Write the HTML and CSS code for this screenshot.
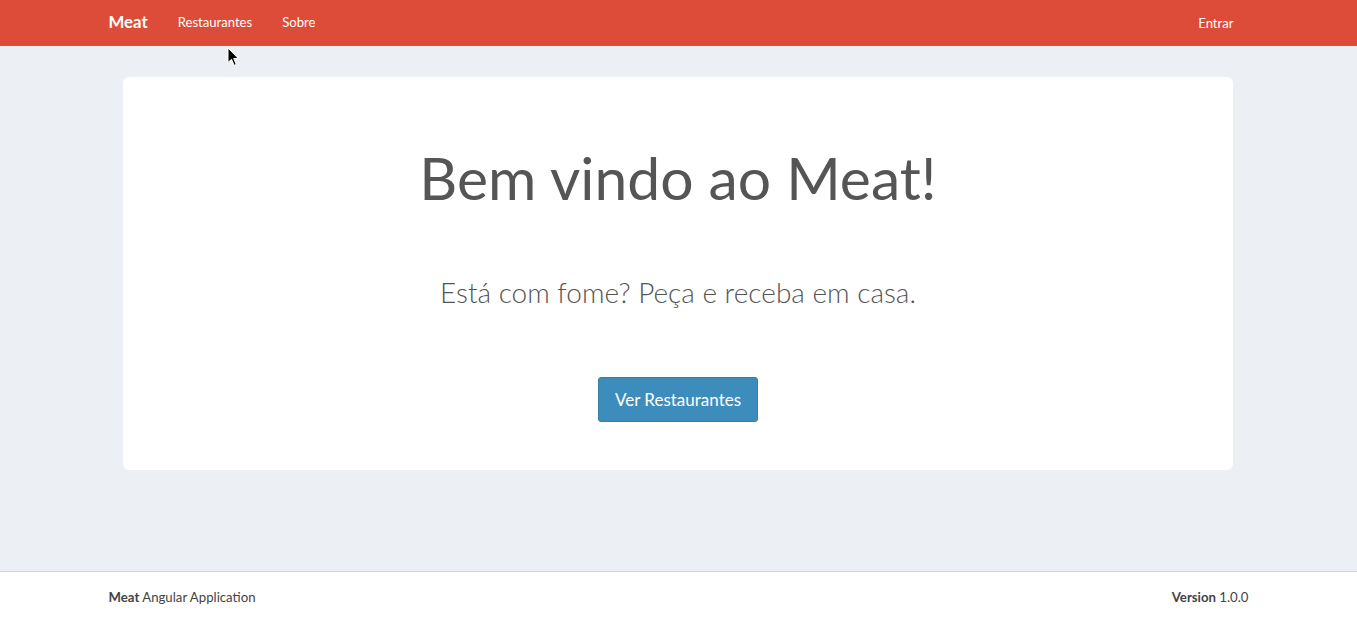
FILE: index.html
```html
<!DOCTYPE html>
<html lang="pt-BR">
<head>
<meta charset="utf-8">
<title>Meat</title>
<link rel="stylesheet" href="styles.css">
</head>
<body>
<header class="navbar">
  <div class="container nav-inner">
    <a class="brand" href="#">Meat</a>
    <nav class="nav-links">
      <a href="#">Restaurantes</a>
      <a href="#">Sobre</a>
    </nav>
    <nav class="nav-right">
      <a href="#">Entrar</a>
    </nav>
  </div>
</header>
<main class="content">
  <div class="container">
    <section class="jumbotron">
      <h1 class="title">Bem vindo ao Meat!</h1>
      <p class="lead">Está com fome? Peça e receba em casa.</p>
      <a class="btn" href="#">Ver Restaurantes</a>
    </section>
  </div>
</main>
<footer class="footer">
  <div class="container footer-inner">
    <div><strong>Meat</strong> Angular Application</div>
    <div><strong>Version</strong> 1.0.0</div>
  </div>
</footer>
<svg class="cursor" width="13" height="20" viewBox="0 0 13 20"><path d="M1 1 L1 15.5 L4.5 12.3 L7.2 18.3 L9.3 17.4 L6.7 11.5 L11.3 11.5 Z" fill="#000" stroke="#fff" stroke-width="1" stroke-linejoin="round"/></svg>
</body>
</html>
```
FILE: styles.css
```css
* { box-sizing: border-box; }
html, body { margin: 0; padding: 0; }
body {
  font-family: "Lato", "Liberation Sans", sans-serif;
  background: #ecf0f5;
  color: #333;
  height: 619px;
  overflow: hidden;
  position: relative;
  padding-right: 1px;
}
a { text-decoration: none; }
.container {
  width: 1170px;
  margin: 0 auto;
  padding: 0 15px;
}
.navbar {
  background: #dd4b39;
  height: 46px;
  margin-right: -1px;
}
.nav-inner {
  display: flex;
  align-items: center;
  height: 46px;
  padding-bottom: 2px;
}
.brand {
  color: #fff;
  font-weight: 700;
  font-size: 16.8px;
  line-height: 20px;
  padding-right: 15px;
}
.nav-links { display: flex; }
.nav-links a, .nav-right a {
  color: #fff;
  font-size: 13.1px;
  line-height: 20px;
  padding: 0 15px;
}
.nav-right { margin-left: auto; }
.content {
  height: 525px;
  padding-top: 31px;
}
.jumbotron {
  margin: 0 15px;
  background: #fff;
  border-radius: 6px;
  height: 393px;
  padding-top: 69px;
  text-align: center;
}
.title {
  margin: 0;
  font-size: 58.8px;
  font-weight: 400;
  line-height: 64.5px;
  color: #555;
}
.lead {
  margin: 62px 0 0;
  font-size: 28px;
  font-weight: 300;
  line-height: 39px;
  color: #555;
}
.btn {
  display: inline-block;
  margin-top: 65px;
  background: #3c8dbc;
  border: 1px solid #367fa9;
  border-radius: 3px;
  color: #fff;
  font-size: 17px;
  line-height: 23px;
  padding: 10px 16px;
  white-space: nowrap;
}
.footer {
  background: #fff;
  border-top: 1px solid #d2d6de;
  padding: 15px 0;
  margin-right: -1px;
  color: #444;
  font-size: 13.2px;
  line-height: 20px;
}
.footer-inner {
  display: flex;
  justify-content: space-between;
}
.footer strong { font-weight: 700; }
.cursor {
  position: absolute;
  left: 227px;
  top: 47px;
}
```
